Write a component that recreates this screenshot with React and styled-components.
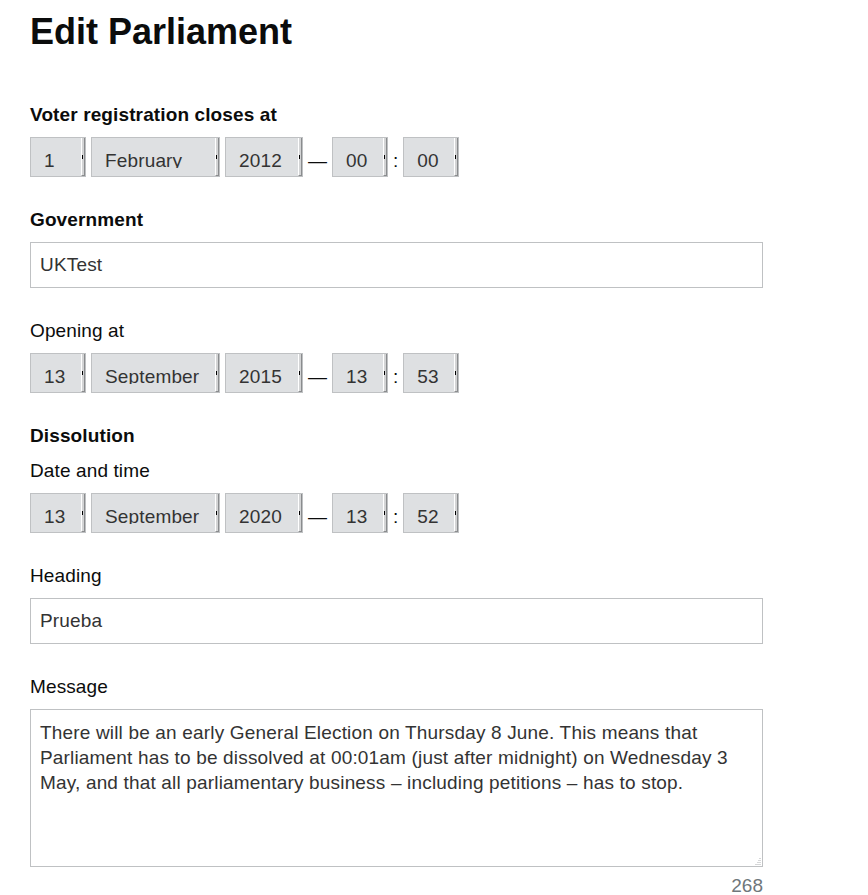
import React from "react";
import styled, { createGlobalStyle } from "styled-components";

const GlobalStyle = createGlobalStyle`
  html, body { margin: 0; padding: 0; background: #fff; }
  body { font-family: "Liberation Sans", Arial, sans-serif; color: #0b0c0c; }
  * { box-sizing: border-box; }
`;

const Page = styled.main`
  padding: 12px 0 0 30px;
  width: 763px;
`;

const Title = styled.h1`
  margin: 0 0 50px;
  font-size: 36px;
  line-height: 40px;
  font-weight: 700;
`;

const Group = styled.div`
  margin-bottom: 30px;
`;

const Label = styled.div`
  display: block;
  font-size: 19px;
  line-height: 25px;
  letter-spacing: 0.12px;
  font-weight: ${(p) => (p.$bold ? 700 : 400)};
  margin-bottom: 10px;
`;

const DateRow = styled.div`
  display: flex;
  align-items: flex-start;
  gap: 5px;
`;

const SelectBox = styled.div`
  display: flex;
  width: ${(p) => p.$w}px;
  height: 40px;
  background: #dee0e2;
  border: 1px solid #bfc1c3;
  color: #333;
  font-size: 19px;
  letter-spacing: 0.15px;
`;

const SelectValue = styled.span`
  flex: 1;
  display: block;
  height: 30px;
  overflow: hidden;
  padding: 12px 0 0 13px;
  line-height: 22px;
  white-space: nowrap;
`;

const SelectArrow = styled.span`
  width: 4px;
  height: 100%;
  border-left: 1px solid #ffffff;
  border-right: 1px solid #8a8c8e;
  border-bottom: 1px solid #8a8c8e;
  background: linear-gradient(#000, #000) no-repeat 0 17px / 1px 4px, #d3d4d5;
`;

const Sep = styled.span`
  font-size: 19px;
  line-height: 22px;
  padding-top: 13px;
  color: #0b0c0c;
`;

const TextInput = styled.input`
  display: block;
  width: 733px;
  height: 46px;
  margin: 0;
  padding: 0 9px;
  border: 1px solid #bfc1c3;
  border-radius: 0;
  font-family: "Liberation Sans", Arial, sans-serif;
  font-size: 19px;
  letter-spacing: 0.17px;
  line-height: 44px;
  color: #333;
  background: #fff;
  outline: none;
`;

const grip = "#d6d7d8";

const TextArea = styled.textarea`
  display: block;
  width: 733px;
  height: 158px;
  margin: 1px 0 0;
  padding: 10px 9px;
  border: 1px solid #bfc1c3;
  border-radius: 0;
  font-family: "Liberation Sans", Arial, sans-serif;
  font-size: 19px;
  letter-spacing: 0.17px;
  line-height: 25px;
  color: #333;
  outline: none;
  overflow: hidden;
  resize: none;
  background:
    linear-gradient(${grip}, ${grip}) no-repeat right 1px bottom 1px / 6px 1px,
    linear-gradient(${grip}, ${grip}) no-repeat right 1px bottom 3px / 4px 1px,
    linear-gradient(${grip}, ${grip}) no-repeat right 1px bottom 5px / 3px 1px,
    linear-gradient(${grip}, ${grip}) no-repeat right 1px bottom 7px / 2px 1px,
    #fff;
`;

const Counter = styled.div`
  width: 733px;
  margin-top: 6px;
  text-align: right;
  font-size: 19px;
  line-height: 25px;
  color: #6f777b;
`;

function Select({ value, w }) {
  return (
    <SelectBox $w={w} role="combobox">
      <SelectValue>{value}</SelectValue>
      <SelectArrow />
    </SelectBox>
  );
}

function DateTime({ d, m, y, h, min }) {
  return (
    <DateRow>
      <Select value={d} w={56} />
      <Select value={m} w={129} />
      <Select value={y} w={78} />
      <Sep>—</Sep>
      <Select value={h} w={56} />
      <Sep>:</Sep>
      <Select value={min} w={56} />
    </DateRow>
  );
}

const message =
  "There will be an early General Election on Thursday 8 June. This means that Parliament has to be dissolved at 00:01am (just after midnight) on Wednesday 3 May, and that all parliamentary business – including petitions – has to stop.";

export default function App() {
  return (
    <>
      <GlobalStyle />
      <Page>
        <Title>Edit Parliament</Title>

        <Group>
          <Label $bold>Voter registration closes at</Label>
          <DateTime d="1" m="February" y="2012" h="00" min="00" />
        </Group>

        <Group>
          <Label $bold>Government</Label>
          <TextInput defaultValue="UKTest" />
        </Group>

        <Group>
          <Label>Opening at</Label>
          <DateTime d="13" m="September" y="2015" h="13" min="53" />
        </Group>

        <Group>
          <Label $bold>Dissolution</Label>
          <Label>Date and time</Label>
          <DateTime d="13" m="September" y="2020" h="13" min="52" />
        </Group>

        <Group>
          <Label>Heading</Label>
          <TextInput defaultValue="Prueba" />
        </Group>

        <div>
          <Label>Message</Label>
          <TextArea defaultValue={message} />
          <Counter>268</Counter>
        </div>
      </Page>
    </>
  );
}
